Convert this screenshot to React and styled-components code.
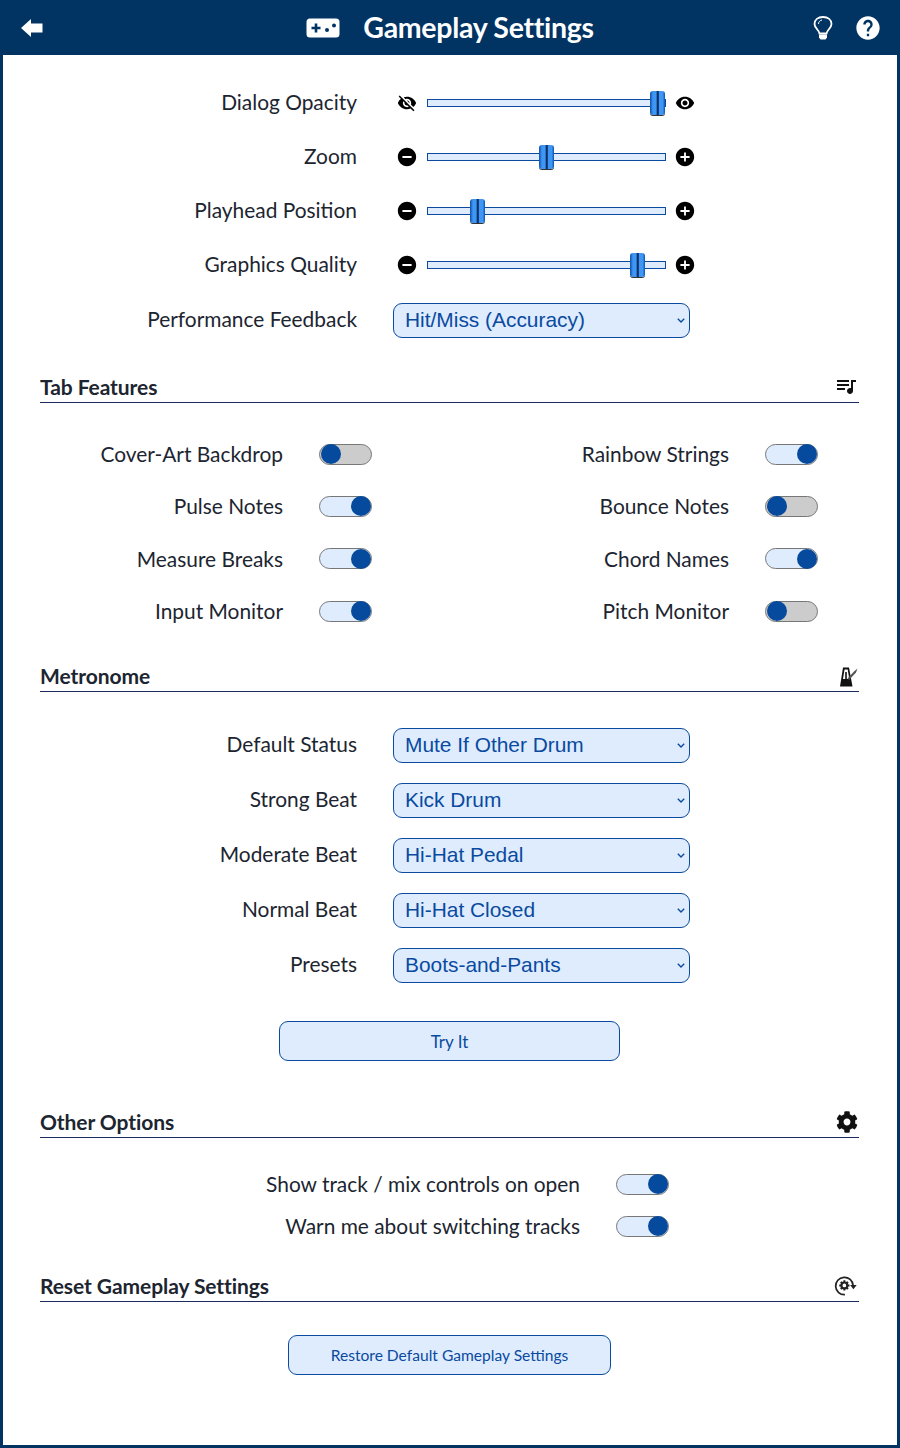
import React from "react";
import styled, { createGlobalStyle } from "styled-components";
import {
  MdAddCircle,
  MdRemoveCircle,
  MdVisibility,
  MdVisibilityOff,
  MdQueueMusic,
  MdHelp,
} from "react-icons/md";
import { FaCog } from "react-icons/fa";

const GlobalStyle = createGlobalStyle`
  html, body {
    margin: 0;
    padding: 0;
    background: #fff;
  }
  * {
    box-sizing: border-box;
  }
`;

const Page = styled.div`
  width: 900px;
  height: 1448px;
  display: flex;
  flex-direction: column;
  background: #fff;
  border: solid #013363;
  border-width: 0 3px 3px 3px;
  font-family: Lato, "Open Sans", sans-serif;
  color: #1c2530;
`;

const Header = styled.header`
  height: 55px;
  margin: 0 -3px;
  flex: none;
  display: grid;
  grid-template-columns: 1fr auto 1fr;
  align-items: center;
  padding: 0 18px;
  background: #013363;
  color: #fff;
`;

const BackLink = styled.div`
  display: flex;
  padding-left: 3px;
`;

const HeaderCenter = styled.div`
  display: flex;
  align-items: center;
  gap: 23px;
`;

const HeaderTitle = styled.h1`
  margin: 0;
  font-size: 28.5px;
  font-weight: 700;
  letter-spacing: -0.3px;
  line-height: 55px;
`;

const HeaderRight = styled.div`
  display: flex;
  justify-content: flex-end;
  align-items: center;
  gap: 21px;
`;

const Body = styled.main`
  flex: 1;
  display: flex;
  flex-direction: column;
  padding: 21px 38px 0 37px;
`;

const FormRow = styled.div`
  height: ${(p) => p.$height}px;
  display: grid;
  grid-template-columns: 317px 1fr;
  column-gap: 36px;
  align-items: center;
`;

const Label = styled.label`
  font-size: 20.9px;
  line-height: 24px;
  text-align: right;
  white-space: nowrap;
  position: relative;
  top: ${(p) => p.$shift || 0}px;
`;

const SliderWrap = styled.div`
  display: flex;
  align-items: center;
  width: 302px;
  height: 24px;
  margin-left: 4px;
  gap: 10px;
  color: #000;
`;

const IconBox = styled.span`
  flex: none;
  width: 20px;
  height: 20px;
  display: flex;
  align-items: center;
  justify-content: center;
  &:last-child {
    margin-left: -1px;
  }
  svg {
    flex: none;
  }
`;

const Slider = styled.input`
  appearance: none;
  -webkit-appearance: none;
  width: 239px;
  height: 24px;
  margin: 0;
  background: transparent;
  &::-webkit-slider-runnable-track {
    height: 8px;
    background: #deecfe;
    border: 1.5px solid #0a4a9f;
  }
  &::-webkit-slider-thumb {
    -webkit-appearance: none;
    width: 15px;
    height: 24px;
    margin-top: -9px;
    border-radius: 3px;
    background: linear-gradient(
      to right,
      #0d4fa8 0,
      #3f97f5 20%,
      #3f97f5 42%,
      #0b2f66 46%,
      #0b2f66 56%,
      #3f97f5 60%,
      #3f97f5 85%,
      #0d4fa8 100%
    );
    box-shadow: 0 1px 0 #333;
  }
`;

const SelectWrap = styled.div`
  position: relative;
  width: 297px;
  height: 35px;
  color: #0a4a9f;
  svg {
    position: absolute;
    right: 5px;
    top: 15px;
  }
`;

const Select = styled.select`
  appearance: none;
  -webkit-appearance: none;
  width: 100%;
  height: 100%;
  padding: 0 7px 2px 11px;
  font-family: "Liberation Sans", Arial, sans-serif;
  font-size: 20.9px;
  color: #0a4a9f;
  background-color: #deecfe;
  border: 1.5px solid #0a4a9f;
  border-radius: 9px;
`;

const SectionHead = styled.div`
  display: flex;
  justify-content: space-between;
  align-items: flex-end;
  height: ${(p) => p.$height}px;
  border-bottom: 1px solid #1a2a5e;
  padding-bottom: 2px;
`;

const SectionTitle = styled.h2`
  margin: 0;
  font-size: 21px;
  font-weight: 700;
  line-height: 26px;
  letter-spacing: -0.08px;
`;

const SectionIcon = styled.span`
  display: flex;
  margin: 0 1px 2px 0;
  color: #111;
`;

const ToggleGrid = styled.div`
  display: grid;
  grid-template-columns: 1fr 1fr;
  grid-template-rows: 52px 52px 53px 52px;
  padding-top: 25px;
`;

const ToggleItem = styled.div`
  display: grid;
  grid-template-columns: ${(p) => p.$labelWidth}px 53px;
  column-gap: 36px;
  align-items: center;
`;

const Toggle = styled.span`
  display: flex;
  width: 53px;
  height: 21px;
  border-radius: 11px;
  border: 1.5px solid #777;
  justify-content: ${(p) => (p.$on ? "flex-end" : "flex-start")};
  align-items: center;
  background: ${(p) => (p.$on ? "#deecfe" : "#cccccc")};
  &::after {
    content: "";
    width: 20px;
    height: 20px;
    border-radius: 50%;
    background: #064a9e;
    margin: 0 0.5px;
  }
`;

const Rows = styled.div`
  padding-top: ${(p) => p.$top}px;
`;

const ButtonRow = styled.div`
  display: flex;
  justify-content: center;
  margin-top: ${(p) => p.$top}px;
`;

const Button = styled.button`
  width: ${(p) => p.$width}px;
  height: 40px;
  font-family: Lato, sans-serif;
  font-size: ${(p) => p.$size}px;
  color: #0a4a9f;
  background: #deecfe;
  border: 1.5px solid #0a4a9f;
  border-radius: 9px;
`;

const OptionRow = styled.div`
  height: 42px;
  display: grid;
  grid-template-columns: 540px 53px;
  column-gap: 36px;
  align-items: center;
`;

const ArrowBack = () => (
  <svg width="22" height="18" viewBox="0 0 22 18" fill="#fff">
    <path d="M0 9 L10 0 V4.500 H21.500 V13.500 H10 V18 Z" />
  </svg>
);

const Gamepad = () => (
  <svg width="34" height="20" viewBox="0 0 34 20">
    <rect x="0.500" y="0.500" width="33" height="19" rx="3.500" fill="#fff" />
    <path d="M5.500 10 H14.500 M10 5.500 V14.500" stroke="#013363" strokeWidth="2.600" />
    <circle cx="21" cy="12" r="2" fill="#013363" />
    <circle cx="28" cy="7.500" r="2" fill="#013363" />
  </svg>
);

const Bulb = () => (
  <svg width="20" height="24" viewBox="0 0 20 24" fill="none">
    <path
      d="M6.500 17.500 C6 14 1.500 12 1.500 8 C1.500 3.800 5 1 10 1 C15 1 18.500 3.800 18.500 8 C18.500 12 14 14 13.500 17.500 Z"
      stroke="#fff"
      strokeWidth="1.800"
    />
    <path d="M5.500 8 C5.500 6 6.800 4.500 9 4" stroke="#fff" strokeWidth="1" />
    <path d="M6 18.500 H14 V21.500 L12.500 23.500 H7.500 L6 21.500 Z" fill="#fff" />
  </svg>
);

const Metronome = () => (
  <svg width="18" height="20" viewBox="0 0 18 20" fill="#111">
    <path
      d="M3 0.500 H9 L12.500 19.500 H0 Z M4.500 2.500 L3 12 H5.200 V5 H6.800 V12 H9.300 L7.700 2.500 Z"
      fillRule="evenodd"
    />
    <path d="M7.500 11.500 L14 4.500 L17.500 1.500 L16 5.500 L9 13 Z" fill="#555" />
  </svg>
);

const ResetGear = () => (
  <svg width="24" height="22" viewBox="0 0 22 20" fill="none">
    <path d="M17.500 9.500 A8 8 0 1 0 10 18" stroke="#222" strokeWidth="1.600" />
    <path d="M14.800 9 H20.800 L17.800 13 Z" fill="#222" />
    <circle cx="9.500" cy="9.500" r="2.700" stroke="#222" strokeWidth="2" />
    <path
      d="M9.500 4.800 V6.400 M9.500 12.600 V14.200 M4.800 9.500 H6.400 M12.600 9.500 H14.200 M6.200 6.200 L7.300 7.300 M11.700 11.700 L12.800 12.800 M12.800 6.200 L11.700 7.300 M7.300 11.700 L6.200 12.800"
      stroke="#222"
      strokeWidth="1.800"
    />
  </svg>
);

const Chevron = () => (
  <svg width="8" height="5" viewBox="0 0 8 5" fill="none">
    <path d="M0.800 0.800 L4 4 L7.200 0.800" stroke="currentColor" strokeWidth="1.400" />
  </svg>
);

const sliders = [
  { label: "Dialog Opacity", value: 100, Low: MdVisibilityOff, High: MdVisibility, size: 20 },
  { label: "Zoom", value: 50, Low: MdRemoveCircle, High: MdAddCircle, size: 22 },
  { label: "Playhead Position", value: 19, Low: MdRemoveCircle, High: MdAddCircle, size: 22 },
  { label: "Graphics Quality", value: 91, Low: MdRemoveCircle, High: MdAddCircle, size: 22 },
];

const toggles = [
  ["Cover-Art Backdrop", false, "Rainbow Strings", true],
  ["Pulse Notes", true, "Bounce Notes", false],
  ["Measure Breaks", true, "Chord Names", true],
  ["Input Monitor", true, "Pitch Monitor", false],
];

const metronome = [
  ["Default Status", "Mute If Other Drum"],
  ["Strong Beat", "Kick Drum"],
  ["Moderate Beat", "Hi-Hat Pedal"],
  ["Normal Beat", "Hi-Hat Closed"],
  ["Presets", "Boots-and-Pants"],
];

const Dropdown = ({ value }) => (
  <SelectWrap>
    <Select defaultValue={value}>
      <option>{value}</option>
    </Select>
    <Chevron />
  </SelectWrap>
);

const App = () => {
  return (
    <Page>
      <GlobalStyle />
      <Header>
        <BackLink>
          <ArrowBack />
        </BackLink>
        <HeaderCenter>
          <Gamepad />
          <HeaderTitle>Gameplay Settings</HeaderTitle>
        </HeaderCenter>
        <HeaderRight>
          <Bulb />
          <MdHelp size={28} />
        </HeaderRight>
      </Header>
      <Body>
        {sliders.map(({ label, value, Low, High, size }) => (
          <FormRow key={label} $height={54}>
            <Label $shift={-1}>{label}</Label>
            <SliderWrap>
              <IconBox>
                <Low size={size} />
              </IconBox>
              <Slider type="range" min="0" max="100" defaultValue={value} />
              <IconBox>
                <High size={size} />
              </IconBox>
            </SliderWrap>
          </FormRow>
        ))}
        <FormRow $height={56}>
          <Label $shift={-1}>Performance Feedback</Label>
          <Dropdown value="Hit/Miss (Accuracy)" />
        </FormRow>

        <SectionHead $height={55}>
          <SectionTitle>Tab Features</SectionTitle>
          <SectionIcon>
            <MdQueueMusic size={24} />
          </SectionIcon>
        </SectionHead>
        <ToggleGrid>
          {toggles.map(([a, aOn, b, bOn]) => (
            <React.Fragment key={a}>
              <ToggleItem $labelWidth={243}>
                <Label>{a}</Label>
                <Toggle $on={aOn} />
              </ToggleItem>
              <ToggleItem $labelWidth={279.5}>
                <Label>{b}</Label>
                <Toggle $on={bOn} />
              </ToggleItem>
            </React.Fragment>
          ))}
        </ToggleGrid>

        <SectionHead $height={55}>
          <SectionTitle>Metronome</SectionTitle>
          <SectionIcon>
            <Metronome />
          </SectionIcon>
        </SectionHead>
        <Rows $top={26}>
          {metronome.map(([label, value]) => (
            <FormRow key={label} $height={55}>
              <Label $shift={-2}>{label}</Label>
              <Dropdown value={value} />
            </FormRow>
          ))}
        </Rows>
        <ButtonRow $top={28}>
          <Button $width={341} $size={17}>Try It</Button>
        </ButtonRow>

        <SectionHead $height={77}>
          <SectionTitle>Other Options</SectionTitle>
          <SectionIcon>
            <FaCog size={22} />
          </SectionIcon>
        </SectionHead>
        <Rows $top={25}>
          <OptionRow>
            <Label>Show track / mix controls on open</Label>
            <Toggle $on />
          </OptionRow>
          <OptionRow>
            <Label>Warn me about switching tracks</Label>
            <Toggle $on />
          </OptionRow>
        </Rows>

        <SectionHead $height={55}>
          <SectionTitle>Reset Gameplay Settings</SectionTitle>
          <SectionIcon>
            <ResetGear />
          </SectionIcon>
        </SectionHead>
        <ButtonRow $top={33}>
          <Button $width={323} $size={15.6}>Restore Default Gameplay Settings</Button>
        </ButtonRow>
      </Body>
    </Page>
  );
};

export default App;
